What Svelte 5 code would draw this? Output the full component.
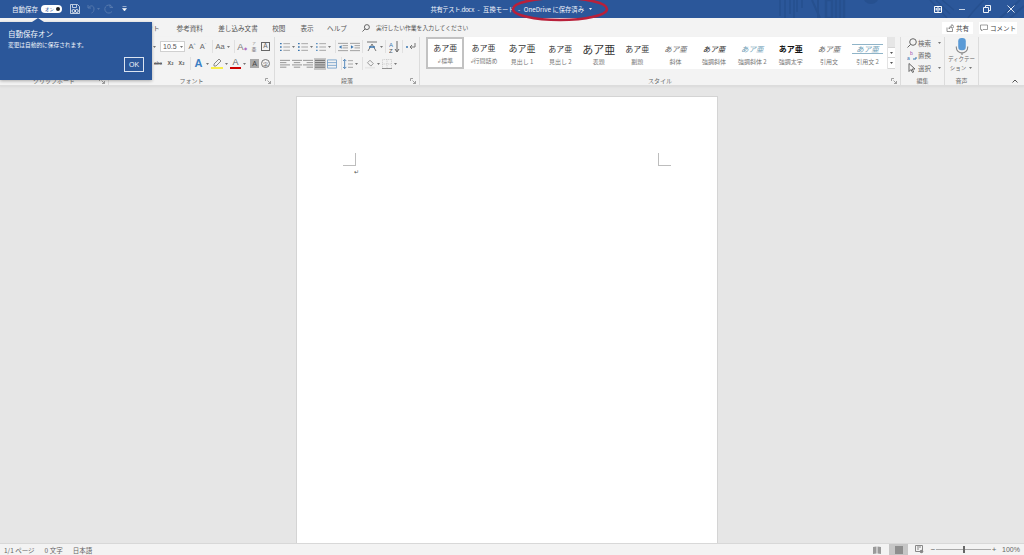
<script lang="ts">
const tabs = [
	{ name: "ファイル", w: 28 },
	{ name: "ホーム", w: 30 },
	{ name: "挿入", w: 26 },
	{ name: "デザイン", w: 34 },
	{ name: "レイアウト", w: 50 },
	{ name: "参考資料", w: 43.5 },
	{ name: "差し込み文書", w: 53 },
	{ name: "校閲", w: 28.5 },
	{ name: "表示", w: 28 },
	{ name: "ヘルプ", w: 32 },
];

const styles = [
	{ label: "標準", sample: "あア亜", cls: "", mark: true, on: true },
	{ label: "行間詰め", sample: "あア亜", cls: "", mark: true },
	{ label: "見出し 1", sample: "あア亜", cls: "big" },
	{ label: "見出し 2", sample: "あア亜", cls: "" },
	{ label: "表題", sample: "あア亜", cls: "title" },
	{ label: "副題", sample: "あア亜", cls: "" },
	{ label: "斜体", sample: "あア亜", cls: "em" },
	{ label: "強調斜体", sample: "あア亜", cls: "em dark" },
	{ label: "強調斜体 2", sample: "あア亜", cls: "em blue" },
	{ label: "強調太字", sample: "あア亜", cls: "bold" },
	{ label: "引用文", sample: "あア亜", cls: "em" },
	{ label: "引用文 2", sample: "あア亜", cls: "em blue lined" },
];
</script>

{#snippet caret(color = "#777")}
	<svg class="caret" width="5" height="4" viewBox="0 0 5 4"><path d="M1 1h3L2.500 3z" fill={color} /></svg>
{/snippet}

{#snippet launcher()}
	<svg class="launcher" width="6" height="6" viewBox="0 0 6 6"><path d="M.5 3V.5H3M5.500 5.500L2.500 2.500M5.500 3v2.500H3" fill="none" stroke="#8a8a8a" stroke-width=".8" /></svg>
{/snippet}

{#snippet listIcon(color = "#3a76b0")}
	<svg width="10" height="10" viewBox="0 0 12 11">
		<path d="M0 1.500h2M0 5.500h2M0 9.500h2" stroke={color} stroke-width="1.600" />
		<path d="M4 1.500h8M4 5.500h8M4 9.500h8" stroke="#999" />
	</svg>
{/snippet}

{#snippet alignIcon(kind: string, cls = "")}
	<svg class={cls} width="10" height="10" viewBox="0 0 11 10">
		{#each [1, 3.500, 6, 8.500] as y, i}
			{@const w = kind === "full" ? 11 : i % 2 ? 7 : 11}
			{@const x = kind === "center" ? (11 - w) / 2 : kind === "right" ? 11 - w : 0}
			<path d="M{x} {y}h{w}" stroke={kind === "full" ? "#666" : "#8c8c8c"} />
		{/each}
	</svg>
{/snippet}

<div class="app">
	<header class="titlebar">
		<svg class="pattern" width="264" height="18" viewBox="0 0 264 18">
			<g stroke="#26508f" fill="none">
				<path d="M20 0v16M25 0v18M30 0v14M34 0v18M37 0v12M42 0v8" stroke-width="1.500" />
				<path d="M52 0l8 18M58 0v18" stroke-width="2" />
				<path d="M66 0v18h6V0zM76 0v18M80 0v18M84 0v18" stroke-width="2.500" />
				<path d="M170 0l17 18M176 0l14 14M182 0l12 10M224 0q-10 10-16 18" stroke-width="1.500" />
			</g>
			<circle cx="111" cy="-4" r="8" fill="#26508f" />
			<path d="M240 18l20-18M250 18l14-12" stroke="#26508f" stroke-width="2" />
		</svg>
		<div class="qat">
			<span class="autosave">自動保存</span>
			<span class="toggle"><span>オン</span><i></i></span>
			<svg class="save" width="10" height="10" viewBox="0 0 10 10"><path d="M.5.500h7l2 2v7h-9z" fill="none" stroke="#e6ecf5" stroke-width=".8" /><path d="M2.500 1v2.500h4V1" fill="none" stroke="#dde6f3" stroke-width=".8" /><circle cx="3.500" cy="7" r="1.500" fill="none" stroke="#fff" stroke-width=".8" /><circle cx="6.800" cy="7" r="1.500" fill="none" stroke="#fff" stroke-width=".8" /></svg>
			<svg class="undo" width="14" height="10" viewBox="0 0 14 10"><path d="M2 1v3h3M2.500 4C4 1 8 1 8 5c0 2-1 3.500-2.500 4" fill="none" stroke="#5578ad" stroke-width="1" /><path d="M11 4h3l-1.500 2z" fill="#5578ad" /></svg>
			<svg class="redo" width="10" height="10" viewBox="0 0 10 10"><path d="M6 .500v3h3M8.500 3.500A4 4 0 1 0 8 7.500" fill="none" stroke="#5578ad" /></svg>
			<svg class="more" width="5" height="6" viewBox="0 0 5 6"><path d="M.5 .500h4M.5 2.500h4L2.500 5z" fill="#fff" stroke="#fff" stroke-width=".5" /></svg>
		</div>
		<div class="doc-title">
			<span class="file">共有テスト.docx</span>
			<span>-</span>
			<span>互換モード</span>
			<span>-</span>
			<span>OneDrive に保存済み</span>
			{@render caret("#f2f5fa")}
		</div>
		<div class="winbtns">
			<svg width="8" height="7" viewBox="0 0 8 7"><path d="M.5.500h7v6h-7zM4 .500v6" fill="none" stroke="#fff" /><path d="M1.500 2h2v2.500h-2zM4.500 2h2v2.500h-2z" fill="#cfdcee" /></svg>
			<svg width="8" height="7" viewBox="0 0 8 7"><path d="M1 3.500h6" stroke="#c5d2e6" /></svg>
			<svg width="8" height="8" viewBox="0 0 8 8"><path d="M.5 2.500h5v5h-5zM2.500 2.500v-2h5v5h-2" fill="none" stroke="#eef2f8" /></svg>
			<svg width="8" height="8" viewBox="0 0 8 8"><path d="M.5.500l7 7M7.500.500l-7 7" stroke="#dfe7f3" /></svg>
		</div>
	</header>

	<nav class="tabs">
		{#each tabs as t}
			<span class="tab" style="width:{t.w}px">{t.name}</span>
		{/each}
		<span class="search">
			<svg width="8" height="8" viewBox="0 0 9 9"><circle cx="5.500" cy="3.500" r="2.800" fill="none" stroke="#555" /><path d="M3.500 5.500L.5 8.500" stroke="#555" /></svg>
			<span>実行したい作業を入力してください</span>
		</span>
		<span class="tab-actions">
			<span class="action share">
				<svg width="8" height="8" viewBox="0 0 8 8"><path d="M1 3.500v4h5.500V5M3 5c0-2 1-3 3-3V.5L8 2.700 6 4.500V3.300C4.500 3.300 3.500 4 3 5z" fill="none" stroke="#666" stroke-width=".7" /></svg>
				共有
			</span>
			<span class="action comment">
				<svg width="8" height="8" viewBox="0 0 8 8"><path d="M.5 1h7v4.500H3L1.500 7V5.500h-1z" fill="none" stroke="#777" stroke-width=".7" /></svg>
				コメント
			</span>
		</span>
	</nav>

	<section class="ribbon">
		<div class="group clipboard">
			<div class="group-body"></div>
			<div class="group-label">クリップボード {@render launcher()}</div>
		</div>

		<div class="group font">
			<div class="group-body font-body">
				<div class="row">
					<span class="select name">{@render caret()}</span>
					<span class="select size">10.5 {@render caret()}</span>
					<span class="ico m2">A<sup>^</sup></span>
					<span class="ico m1">A<sup>ˇ</sup></span>
					<i class="sep m4"></i>
					<span class="ico wide">Aa {@render caret()}</span>
					<i class="sep m2"></i>
					<span class="ico ab m2">A<b>◆</b></span>
					<span class="ico ruby m2"><small>ア</small>亜</span>
					<span class="ico boxed m2">A</span>
				</div>
				<div class="row second">
					<span class="ico strike">abc</span>
					<span class="ico script">x<sub>2</sub></span>
					<span class="ico script">x<sup>2</sup></span>
					<i class="sep m3"></i>
					<span class="ico effect m2">A</span>{@render caret()}
					<span class="ico marker m1">
						<svg width="12" height="11" viewBox="0 0 12 11"><path d="M3 6l5-5 2 2-5 5H3z" fill="none" stroke="#888" /><rect y="9" width="12" height="2" fill="#f7ee4a" /></svg>
					</span>{@render caret()}
					<span class="ico color m1">A</span>{@render caret()}
					<span class="ico shaded m3">A</span>
					<span class="ico circled m2">字</span>
				</div>
			</div>
			<div class="group-label">フォント {@render launcher()}</div>
		</div>

		<div class="group para">
			<div class="group-body para-body">
				<div class="row">
					{@render listIcon()}{@render caret()}
					<span class="m2 cell">{@render listIcon()}</span>{@render caret()}
					<span class="m2 cell">{@render listIcon("#5f93c2")}</span>{@render caret()}
					<i class="sep m3"></i>
					<svg class="m2" width="10" height="10" viewBox="0 0 11 10"><path d="M0 1h11M5 3.500h6M5 6h6M0 9h11" stroke="#999" /><path d="M4 3v4L1 5z" fill="#3a76b0" /></svg>
					<svg class="m2" width="10" height="10" viewBox="0 0 11 10"><path d="M0 1h11M5 3.500h6M5 6h6M0 9h11" stroke="#999" /><path d="M1 3v4l3-2z" fill="#3a76b0" /></svg>
					<i class="sep m2"></i>
					<svg class="m3" width="12" height="11" viewBox="0 0 12 11"><path d="M1 1h10M2 10l4-7 4 7" fill="none" stroke="#777" /><path d="M3 6h6" stroke="#3a76b0" stroke-width="1.500" /></svg>{@render caret()}
					<i class="sep m1"></i>
					<svg class="m3" width="11" height="12" viewBox="0 0 11 12"><text x="0" y="5.500" font-size="6" fill="#3a76b0" font-family="Liberation Sans">A</text><text x="0" y="11.500" font-size="6" fill="#555" font-family="Liberation Sans">Z</text><path d="M8 0v10M6 8l2 3 2-3" fill="none" stroke="#666" /></svg>
					<i class="sep m2"></i>
					<svg class="m3" width="11" height="10" viewBox="0 0 11 10"><path d="M9 1v4H4M6 3L4 5l2 2" fill="none" stroke="#777" /><path d="M0 5h2" stroke="#3a76b0" stroke-width="1.500" /></svg>
				</div>
				<div class="row second">
					{@render alignIcon("left")}
					{@render alignIcon("center", "m2")}
					{@render alignIcon("right", "m1")}
					<span class="active m1">{@render alignIcon("full")}</span>
					<svg class="m1" width="10" height="10" viewBox="0 0 11 10"><path d="M.5.500h10v9H.5zM0 3.500h11M0 6.500h11" fill="none" stroke="#7aa5cc" /></svg>
					<i class="sep m4"></i>
					<svg class="m1" width="10" height="10" viewBox="0 0 12 11"><path d="M2 0v11M0 2l2-2 2 2M0 9l2 2 2-2" fill="none" stroke="#3a76b0" /><path d="M6 1.500h6M6 5.500h6M6 9.500h6" stroke="#999" /></svg>{@render caret()}
					<i class="sep m3"></i>
					<svg class="m2" width="10" height="10" viewBox="0 0 12 11"><path d="M6 1l4 4-3 3-4-4z" fill="none" stroke="#888" /><rect y="9" width="12" height="2" fill="#e7e7e7" /></svg>{@render caret()}
					<svg class="m1" width="10" height="10" viewBox="0 0 11 11"><path d="M.5.500h10v10H.5zM.5 5.500h10M5.500.500v10" fill="none" stroke="#c4c4c4" stroke-dasharray="1 1" /><path d="M0 10.500h11" stroke="#888" /></svg>{@render caret()}
				</div>
			</div>
			<div class="group-label">段落 {@render launcher()}</div>
		</div>

		<div class="group style-group">
			<div class="group-body gallery-wrap">
				<div class="gallery">
					{#each styles as s}
						<div class="style-item" class:on={s.on}>
							<span class="sample {s.cls}">{s.sample}</span>
							<span class="style-label">{#if s.mark}<em>↲</em> {/if}{s.label}</span>
						</div>
					{/each}
				</div>
				<div class="scroller">
					<span class="off"></span>
					<span>{@render caret("#555")}</span>
					<span>{@render caret("#555")}</span>
				</div>
			</div>
			<div class="group-label">スタイル {@render launcher()}</div>
		</div>

		<div class="group edit">
			<div class="group-body edit-body">
				<div class="edit-row">
					<svg width="10" height="10" viewBox="0 0 10 10"><circle cx="6" cy="4" r="3.300" fill="none" stroke="#666" /><path d="M3.500 6.500L.5 9.500" stroke="#666" /></svg>
					<span>検索</span>{@render caret()}
				</div>
				<div class="edit-row">
					<svg width="10" height="10" viewBox="0 0 10 10"><text x="3" y="4.500" font-size="5" fill="#a04fb0" font-family="Liberation Sans">b</text><text x="0" y="9.500" font-size="5" fill="#3a76b0" font-family="Liberation Sans">a</text><path d="M6 9h3V7" fill="none" stroke="#3a76b0" /></svg>
					<span>置換</span>
				</div>
				<div class="edit-row">
					<svg width="10" height="10" viewBox="0 0 10 10"><path d="M2 .500v8l2-2 1.500 3 1.200-.6-1.500-2.900h2.800z" fill="none" stroke="#666" /></svg>
					<span>選択</span>{@render caret()}
				</div>
			</div>
			<div class="group-label">編集</div>
		</div>

		<div class="group voice">
			<div class="group-body voice-body">
				<svg width="14" height="17" viewBox="0 0 14 18"><rect x="3" y="0" width="8" height="13" rx="3.500" fill="#5a9ad6" /><path d="M1 9v1a6 6 0 0 0 12 0V9M7 15v3" fill="none" stroke="#888" stroke-width="1.200" /></svg>
				<span class="voice-text">ディクテー<br />ション {@render caret()}</span>
			</div>
			<div class="group-label">音声</div>
		</div>

		<div class="collapse">
			<svg width="6" height="4" viewBox="0 0 6 4"><path d="M.5 3.500L3 1l2.500 2.500" fill="none" stroke="#555" /></svg>
		</div>
	</section>

	<main class="canvas">
		<div class="page">
			<div class="margins">
				<i class="corner left"></i>
				<i class="corner right"></i>
			</div>
			<span class="para-mark">↵</span>
		</div>
	</main>

	<footer class="status">
		<div class="status-left">
			<span>1/1 ページ</span>
			<span>0 文字</span>
			<span>日本語</span>
		</div>
		<div class="status-right">
			<svg width="8" height="8" viewBox="0 0 8 8"><path d="M0 1l3.500-.5v7L0 8zM8 1L4.500.500v7L8 8z" fill="#9a9a9a" /></svg>
			<span class="view-on"><i></i></span>
			<svg class="print" width="9" height="9" viewBox="0 0 9 9"><path d="M.5.500h7v6h-7z" fill="none" stroke="#888" /><path d="M2 2h4M2 4h2" stroke="#888" /><circle cx="6.500" cy="6.500" r="1.800" fill="#888" /></svg>
			<span class="zoom">
				<b>−</b>
				<span class="track"><i></i></span>
				<b>+</b>
			</span>
			<span class="pct">100%</span>
		</div>
	</footer>

	<div class="callout">
		<h2>自動保存オン</h2>
		<p>変更は自動的に保存されます。</p>
		<div class="callout-foot"><button>OK</button></div>
	</div>

	<svg class="ring" width="100" height="24" viewBox="0 0 100 24">
		<ellipse cx="50" cy="9" rx="47" ry="11" fill="none" stroke="#b8203a" stroke-width="2.600" />
	</svg>
</div>

<style>
	:global(body) {
		margin: 0;
		background: #e6e6e6;
	}

	.app {
		position: relative;
		display: flex;
		flex-direction: column;
		width: 1024px;
		height: 555px;
		overflow: hidden;
		font-family: "Noto Sans CJK JP", "Liberation Sans", sans-serif;
		color: #555;
	}

	.m1 { margin-left: 1px; }
	.m2 { margin-left: 2px; }
	.m3 { margin-left: 3px; }
	.m4 { margin-left: 4px; }

	.titlebar {
		position: relative;
		display: grid;
		grid-template-columns: 1fr auto 1fr;
		align-items: center;
		height: 18px;
		flex: none;
		background: #2b579a;
		color: #f2f5fa;
		font-size: 6.500px;
	}

	.pattern {
		position: absolute;
		top: 0;
		right: 0;
	}

	.qat {
		display: flex;
		align-items: center;
		padding-left: 12px;
		position: relative;
	}

	.autosave {
		width: 29px;
		white-space: nowrap;
	}

	.toggle {
		display: flex;
		align-items: center;
		justify-content: space-between;
		width: 21px;
		height: 8px;
		padding: 0 2px 0 4px;
		box-sizing: border-box;
		border-radius: 4px;
		background: #fff;
		color: #2b579a;
		font-size: 4.500px;
	}

	.toggle i {
		width: 4px;
		height: 4px;
		border-radius: 50%;
		background: #222;
	}

	.save {
		margin-left: 8px;
	}

	.undo {
		margin-left: 6px;
	}

	.redo {
		margin-left: 4px;
	}

	.more {
		margin-left: 8px;
	}

	.doc-title {
		position: relative;
		display: flex;
		align-items: center;
		gap: 3.500px;
		white-space: nowrap;
		font-size: 6.300px;
	}

	.file {
		letter-spacing: -0.400px;
	}

	.winbtns {
		position: relative;
		display: flex;
		justify-content: flex-end;
		align-items: center;
		gap: 16.500px;
		padding-right: 9px;
	}

	.tabs {
		display: flex;
		align-items: center;
		height: 19px;
		flex: none;
		background: #f3f3f3;
		font-size: 6.600px;
		color: #555;
	}

	.tab {
		text-align: center;
		flex: none;
		white-space: nowrap;
	}

	.search {
		display: flex;
		align-items: center;
		gap: 6px;
		margin-left: 9px;
		white-space: nowrap;
		font-size: 5.800px;
	}

	.tab-actions {
		display: flex;
		gap: 6px;
		margin-left: auto;
		padding-right: 7px;
	}

	.action {
		display: flex;
		align-items: center;
		justify-content: center;
		gap: 2px;
		height: 12px;
		background: #fff;
		font-size: 6.500px;
		color: #444;
		white-space: nowrap;
	}

	.share {
		width: 31px;
	}

	.comment {
		width: 38px;
	}

	.ribbon {
		display: grid;
		grid-template-columns: 109px 166px 145px 481px 44px 34px 1fr;
		height: 48px;
		flex: none;
		background: #f3f3f3;
		border-bottom: 1px solid #dcdcdc;
		box-shadow: 0 1px 2px rgba(0, 0, 0, 0.06);
		position: relative;
	}

	.group {
		display: flex;
		flex-direction: column;
		border-right: 1px solid #dcdcdc;
		min-width: 0;
	}

	.group-body {
		flex: 1;
		min-height: 0;
	}

	.group-label {
		position: relative;
		height: 10px;
		line-height: 11px;
		text-align: center;
		font-size: 6px;
		color: #666;
		white-space: nowrap;
	}

	.launcher {
		position: absolute;
		right: 3px;
		top: 3px;
	}

	.row {
		display: flex;
		align-items: center;
		height: 15px;
	}

	.row.second {
		margin-top: 2px;
	}

	.sep {
		width: 1px;
		height: 13px;
		background: #e0e0e0;
		flex: none;
	}

	.caret {
		flex: none;
		margin-left: 1px;
	}

	.font-body {
		padding: 2px 0 0 40px;
	}

	.select {
		display: flex;
		align-items: center;
		height: 11px;
		background: #fff;
		border: 1px solid #d0d0d0;
		font-size: 7px;
		box-sizing: border-box;
		font-family: "Liberation Sans", sans-serif;
	}

	.select.name {
		width: 10px;
		border: 0;
		background: transparent;
		justify-content: center;
	}

	.select.size {
		width: 25px;
		margin-left: 1px;
		padding-left: 2px;
		justify-content: space-between;
	}

	.ico {
		display: inline-flex;
		align-items: center;
		justify-content: center;
		width: 10px;
		font-family: "Liberation Sans", sans-serif;
		font-size: 7.500px;
		color: #666;
		flex: none;
		line-height: 1;
	}

	.ico sup {
		font-size: 4px;
		align-self: flex-start;
		color: #3a76b0;
	}

	.ico.wide {
		width: 18px;
		margin-left: 1px;
	}

	.ab {
		color: #777;
		font-size: 9.500px;
	}

	.ab b {
		font-size: 4px;
		color: #b06fc0;
		align-self: flex-end;
	}

	.ruby {
		flex-direction: column;
		font-size: 5px;
		font-family: "Noto Sans CJK JP", sans-serif;
	}

	.ruby small {
		font-size: 3.500px;
		color: #888;
	}

	.boxed {
		width: 9px;
		height: 9px;
		border: 1px solid #666;
		box-sizing: border-box;
		font-size: 6.500px;
	}

	.strike {
		width: 16px;
		text-decoration: line-through;
		font-size: 5px;
		color: #666;
		padding-left: 2px;
		box-sizing: border-box;
	}

	.script {
		width: 11px;
		font-size: 6.500px;
		font-weight: 700;
	}

	.script sub,
	.script sup {
		font-size: 4px;
		color: #555;
		align-self: auto;
	}

	.effect {
		width: 11px;
		font-size: 11px;
		font-weight: 700;
		color: #3c7fc4;
	}

	.marker {
		width: 12px;
	}

	.color {
		width: 11px;
		font-size: 9px;
		color: #666;
		border-bottom: 2px solid #c00;
		height: 10px;
		box-sizing: border-box;
	}

	.shaded {
		width: 9px;
		height: 9px;
		background: #a8a8a8;
		color: #444;
		font-size: 7px;
	}

	.circled {
		width: 9px;
		height: 9px;
		border: 1px solid #777;
		border-radius: 50%;
		font-size: 5px;
		box-sizing: border-box;
		font-family: "Noto Sans CJK JP", sans-serif;
	}

	.para-body {
		padding: 2px 0 0 5px;
	}

	.cell {
		display: flex;
	}

	.active {
		display: flex;
		align-items: center;
		justify-content: center;
		width: 12px;
		height: 12px;
		background: #c6c6c6;
	}

	.gallery-wrap {
		display: flex;
		align-items: flex-start;
		padding: 0 0 0 6px;
	}

	.gallery {
		display: grid;
		grid-template-columns: repeat(12, 38.400px);
		height: 32px;
		background: #fff;
	}

	.style-item {
		display: flex;
		flex-direction: column;
		align-items: center;
		justify-content: center;
		height: 32px;
		box-sizing: border-box;
		white-space: nowrap;
	}

	.style-item.on {
		border: 2px solid #c2c2c2;
	}

	.sample {
		height: 16px;
		line-height: 16px;
		font-family: "Noto Sans CJK JP", serif;
		font-size: 8px;
		color: #333;
	}

	.sample.big {
		font-size: 9px;
	}

	.sample.title {
		font-size: 11px;
	}

	.sample.em {
		font-style: italic;
		font-size: 7.500px;
		color: #666;
	}

	.sample.dark {
		color: #222;
	}

	.sample.blue {
		color: #6e9db5;
	}

	.sample.bold {
		font-weight: 700;
		color: #111;
	}

	.sample.lined {
		border-top: 1px solid #8fb4c8;
		border-bottom: 1px solid #8fb4c8;
		height: 8px;
		line-height: 8px;
		margin: 3px 0 3px;
		padding: 0 4px;
	}

	.style-label {
		font-size: 6px;
		line-height: 9px;
		color: #777;
	}

	.style-label em {
		font-style: normal;
		font-size: 4.500px;
	}

	.scroller {
		display: flex;
		flex-direction: column;
		width: 8px;
		height: 32px;
		border-left: 1px solid #e3e3e3;
		box-sizing: border-box;
	}

	.scroller span {
		display: flex;
		align-items: center;
		justify-content: center;
		flex: 1;
		background: #fff;
		border-bottom: 1px solid #d5d5d5;
	}

	.scroller .caret {
		margin: 0;
	}

	.scroller .off {
		background: #e6e6e6;
	}

	.edit-body {
		display: flex;
		flex-direction: column;
		gap: 1.500px;
		padding: 0 0 0 6px;
	}

	.edit-row {
		display: flex;
		align-items: center;
		gap: 1px;
		height: 11px;
		font-size: 6.500px;
		color: #666;
		white-space: nowrap;
	}

	.edit-row .caret {
		margin-left: 5px;
	}

	.voice-body {
		display: flex;
		flex-direction: column;
		align-items: center;
		padding-top: 1px;
	}

	.voice-text {
		font-size: 5.500px;
		line-height: 8.500px;
		text-align: center;
		color: #666;
		white-space: nowrap;
	}

	.collapse {
		display: flex;
		align-items: flex-end;
		justify-content: flex-end;
		padding: 0 6px 2px 0;
	}

	.canvas {
		flex: 1;
		min-height: 0;
		display: flex;
		justify-content: center;
		padding: 10px 10px 0 0;
		background: #e6e6e6;
		overflow: hidden;
	}

	.page {
		width: 422px;
		height: 600px;
		background: #fff;
		border: 1px solid #d4d4d4;
		box-sizing: border-box;
		padding: 56px 46px 0;
		flex: none;
	}

	.margins {
		display: flex;
		justify-content: space-between;
		height: 13px;
	}

	.corner {
		width: 13px;
		height: 13px;
		box-sizing: border-box;
		border-bottom: 1px solid #bdbdbd;
	}

	.corner.left {
		border-right: 1px solid #bdbdbd;
	}

	.corner.right {
		border-left: 1px solid #bdbdbd;
	}

	.para-mark {
		display: block;
		margin: 2px 0 0 11px;
		font-size: 6px;
		line-height: 8px;
		color: #555;
	}

	.status {
		display: flex;
		justify-content: space-between;
		align-items: center;
		height: 11px;
		flex: none;
		background: #f3f3f3;
		border-top: 1px solid #d8d8d8;
		font-size: 6.500px;
		color: #666;
	}

	.status-left {
		display: flex;
		gap: 10px;
		padding-left: 4px;
	}

	.status-right {
		display: flex;
		align-items: center;
		padding-right: 5px;
		height: 100%;
	}

	.view-on {
		display: flex;
		align-items: center;
		justify-content: center;
		width: 19px;
		height: 100%;
		margin-left: 8px;
		background: #c6c6c6;
	}

	.view-on i {
		width: 8px;
		height: 8px;
		background: #8e8e8e;
	}

	.print {
		margin-left: 7px;
	}

	.zoom {
		display: flex;
		align-items: center;
		margin-left: 6px;
	}

	.zoom b {
		width: 6px;
		text-align: center;
		font-weight: 400;
		font-family: "Liberation Sans", sans-serif;
		font-size: 8px;
		line-height: 8px;
	}

	.track {
		position: relative;
		width: 55px;
		height: 1px;
		background: #aaa;
	}

	.track i {
		position: absolute;
		left: 27px;
		top: -3px;
		width: 2px;
		height: 7px;
		background: #666;
	}

	.pct {
		width: 17px;
		margin-left: 5px;
		font-family: "Liberation Sans", sans-serif;
		font-size: 7px;
	}

	.callout {
		position: absolute;
		left: 0;
		top: 22px;
		width: 152px;
		height: 58px;
		box-sizing: border-box;
		padding: 6px 8px;
		background: #2b579a;
		color: #f2f5fa;
		box-shadow: 0 1px 3px rgba(0, 0, 0, 0.3);
	}

	.callout::before {
		content: "";
		position: absolute;
		left: 32px;
		top: -4px;
		border-left: 6px solid transparent;
		border-right: 6px solid transparent;
		border-bottom: 4px solid #2b579a;
	}

	.callout h2 {
		margin: 0;
		font-size: 7.500px;
		line-height: 12px;
		font-weight: 400;
	}

	.callout p {
		margin: 0;
		font-size: 5.700px;
		line-height: 10px;
	}

	.callout-foot {
		display: flex;
		justify-content: flex-end;
		margin-top: 7px;
	}

	.callout button {
		width: 20px;
		height: 15px;
		padding: 0;
		background: transparent;
		border: 1px solid #dbe4f1;
		color: #f2f5fa;
		font-family: "Liberation Sans", sans-serif;
		font-size: 7px;
	}

	.ring {
		position: absolute;
		left: 510px;
		top: 0;
	}
</style>
